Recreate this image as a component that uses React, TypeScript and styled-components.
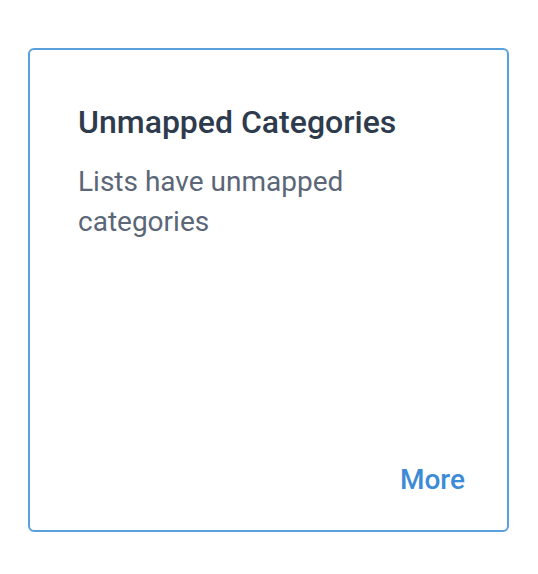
import styled, { createGlobalStyle } from "styled-components";

const GlobalStyle = createGlobalStyle`
  body {
    margin: 0;
    background: #ffffff;
    font-family: Roboto, "Liberation Sans", sans-serif;
  }
`;

function App() {
  return (
    <Page>
      <GlobalStyle />
      <Card>
        <Title>Unmapped Categories</Title>
        <Description>Lists have unmapped categories</Description>
        <Footer>
          <MoreLink href="#">More</MoreLink>
        </Footer>
      </Card>
    </Page>
  );
}

export default App;

const Page = styled.div`
  padding: 48px 0 0 28px;
`;
const Card = styled.div`
  box-sizing: border-box;
  display: flex;
  flex-direction: column;
  width: 481px;
  height: 484px;
  padding: 52px 42px 34px 48px;
  border: 2px solid #5aa0dc;
  border-radius: 6px;
`;
const Title = styled.h2`
  margin: 0 0 20px;
  font-size: 32px;
  font-weight: 500;
  line-height: 40px;
  color: #2e3b4d;
`;
const Description = styled.p`
  margin: 0;
  width: 330px;
  font-size: 28px;
  line-height: 40px;
  color: #5b6676;
`;
const Footer = styled.div`
  display: flex;
  justify-content: flex-end;
  margin-top: auto;
`;
const MoreLink = styled.a`
  font-size: 28px;
  font-weight: 500;
  line-height: 32px;
  color: #3d8ad6;
  text-decoration: none;
`;
